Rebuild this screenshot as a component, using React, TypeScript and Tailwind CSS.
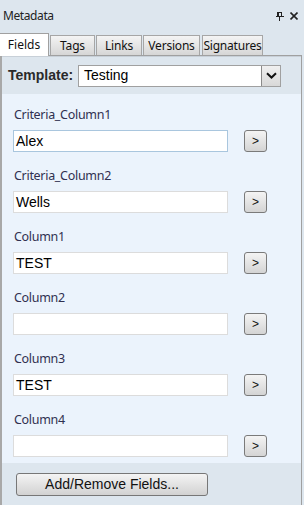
import React from "react";

const rows = [
  { label: "Criteria_Column1", value: "Alex", focus: true },
  { label: "Criteria_Column2", value: "Wells" },
  { label: "Column1", value: "TEST" },
  { label: "Column2", value: "" },
  { label: "Column3", value: "TEST" },
  { label: "Column4", value: "" },
];

const tabs = [
  { name: "Fields", w: "w-[49px]" },
  { name: "Tags", w: "w-[45px] ml-[1px]" },
  { name: "Links", w: "w-[46px] ml-[1px]" },
  { name: "Versions", w: "w-[57px] ml-[1px]" },
  { name: "Signatures", w: "w-[61px] ml-[2px]" },
];

export default function App() {
  return (
    <div className="w-[304px] h-[505px] bg-[#dde6ee] flex flex-col overflow-hidden text-[#1e1e3c]" style={{ fontFamily: '"Noto Sans", "DejaVu Sans", sans-serif' }}>
      {/* Title bar */}
      <div className="h-[32px] flex items-center justify-between pl-[3px] pr-[6px]">
        <span className="text-[12px] text-[#222] tracking-[-0.4px]">Metadata</span>
        <div className="flex items-center gap-[6px]">
          <svg width="8" height="9" viewBox="0 0 8 9">
            <rect x="1" y="0" width="5" height="1" fill="#222" />
            <rect x="1" y="0" width="2" height="5" fill="#222" />
            <rect x="5" y="0" width="1" height="5" fill="#222" />
            <rect x="0" y="4" width="8" height="1" fill="#222" />
            <rect x="3" y="5" width="1" height="4" fill="#222" />
          </svg>
          <svg width="8" height="8" viewBox="0 0 8 8">
            <path d="M0.5 0.5 L7.5 7.5 M7.5 0.5 L0.5 7.5" stroke="#222" strokeWidth="1.6" />
          </svg>
        </div>
      </div>
      {/* Tabs */}
      <div className="h-[23px] flex items-end relative z-10">
        {tabs.map((t, i) =>
          i === 0 ? (
            <div key={t.name} className={`${t.w} h-[23px] bg-white border-t border-r border-[#a0a0a0] flex items-center justify-center text-[12px] text-[#111] -mb-[1px] pb-[1px]`}>
              {t.name}
            </div>
          ) : (
            <div key={t.name} className={`${t.w} h-[20px] bg-gradient-to-b from-[#f4f4f4] to-[#d6d6d6] border border-b-0 border-[#a6a6a6] flex items-center justify-center text-[12px] text-[#111] tracking-[-0.2px]`}>
              {t.name}
            </div>
          )
        )}
      </div>
      {/* Panel */}
      <div className="flex-1 w-[302px] border-l border-r border-t border-[#a0a0a0] border-l-[2px] border-l-[#a8a8a8] flex flex-col">
        {/* Template row */}
        <div className="h-[38px] bg-[#dde6ee] flex items-center pl-[6px] border-t border-[#c8d0d8]">
          <span className="text-[14px] font-bold text-[#2a2a2a] w-[70px]" style={{ fontFamily: '"Liberation Sans", Arial, sans-serif' }}>Template:</span>
          <div className="w-[203px] h-[22px] bg-white border border-[#a0a0a0] flex items-center">
            <span className="flex-1 pl-[5px] text-[14px] text-black" style={{ fontFamily: '"Liberation Sans", Arial, sans-serif' }}>Testing</span>
            <div className="w-[19px] h-[20px] bg-gradient-to-b from-[#f0f0f0] to-[#d8d8d8] border-l border-[#8a8a8a] flex items-center justify-center">
              <svg width="11" height="7" viewBox="0 0 11 7">
                <path d="M1 1.2 L5.5 5.5 L10 1.2" stroke="#111" strokeWidth="2" fill="none" />
              </svg>
            </div>
          </div>
        </div>
        {/* Content */}
        <div className="h-[369px] bg-[#ebf3fc] pt-[13px] pl-[11px] flex flex-col">
          {rows.map((r, i) => (
            <div key={r.label} className={i < rows.length - 1 ? "mb-[16px]" : ""}>
              <div className="h-[16px] leading-[16px] text-[12.5px] text-[#303050] tracking-[-0.3px] pl-[1px]">{r.label}</div>
              <div className="mt-[7px] flex items-center">
                <div className={`w-[215px] h-[22px] bg-white border ${r.focus ? "border-[#a9c6de]" : "border-[#dcdcdc]"} flex items-center pl-[2px] text-[14px] text-black`} style={{ fontFamily: '"Liberation Sans", Arial, sans-serif' }}>
                  {r.value}
                </div>
                <div className="ml-[16px] w-[23px] h-[22px] rounded-[3px] border border-[#7a7a7a] bg-gradient-to-b from-[#f4f4f4] to-[#d4d4d4] flex items-center justify-center text-[12px] text-[#111]" style={{ fontFamily: '"Liberation Sans", Arial, sans-serif' }}>
                  &gt;
                </div>
              </div>
            </div>
          ))}
        </div>
        {/* Bottom */}
        <div className="flex-1 bg-[#dde6ee] pl-[14px] pt-[10px]">
          <div className="w-[192px] h-[23px] rounded-[3px] border border-[#777] bg-gradient-to-b from-[#f4f4f4] to-[#d2d2d2] flex items-center justify-center text-[14px] text-[#111]" style={{ fontFamily: '"Liberation Sans", Arial, sans-serif' }}>
            Add/Remove Fields...
          </div>
        </div>
      </div>
    </div>
  );
}
